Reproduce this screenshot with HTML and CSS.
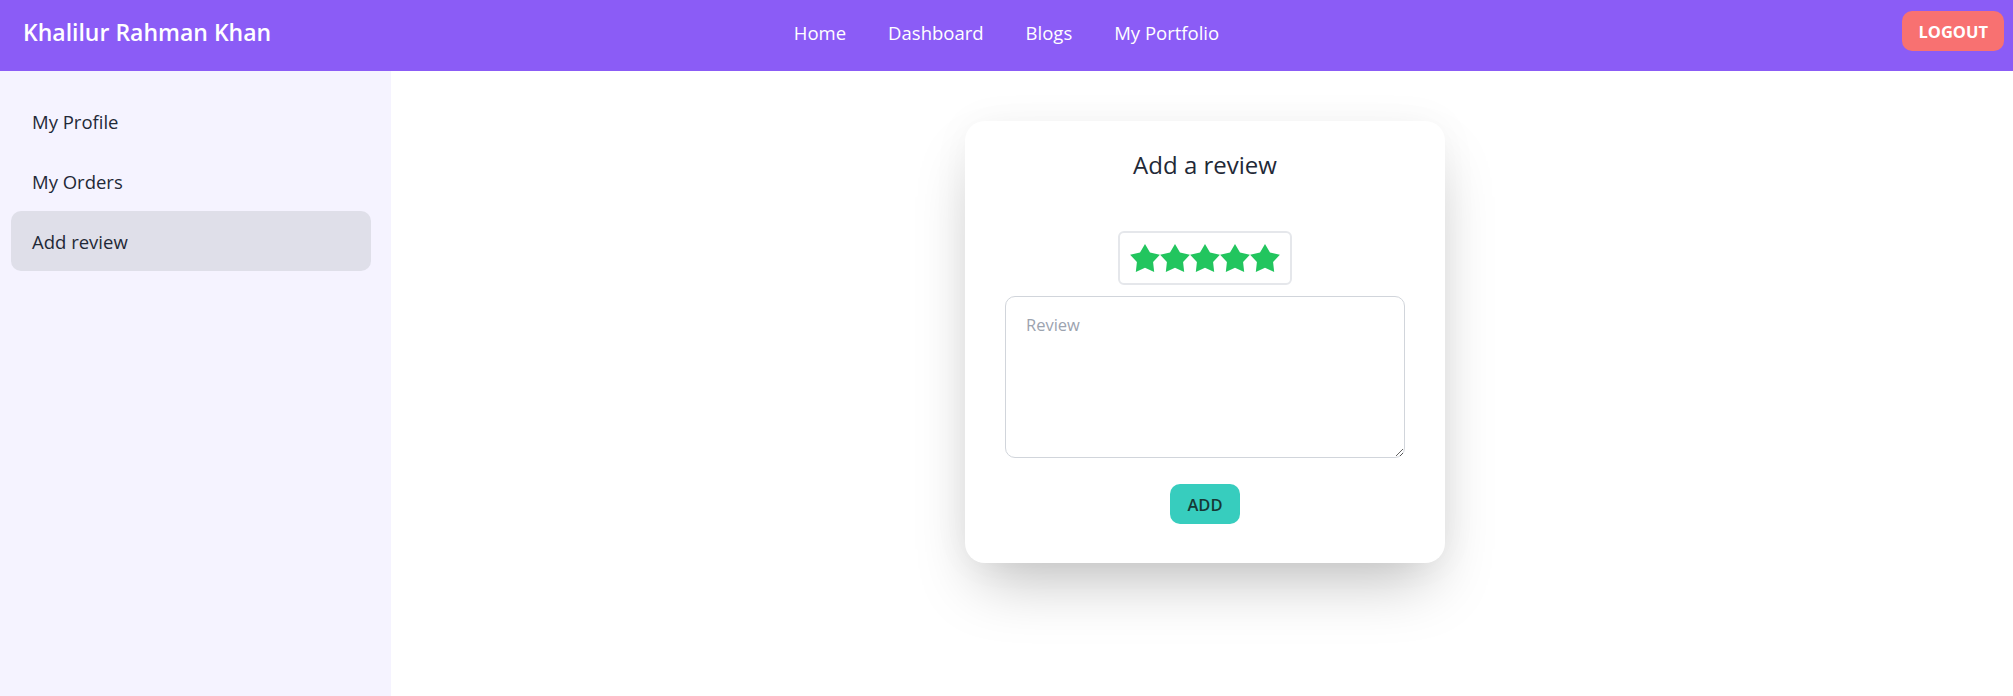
FILE: index.html
```html
<!DOCTYPE html>
<html lang="en">
<head>
<meta charset="utf-8">
<title>Add a review</title>
<link rel="stylesheet" href="styles.css">
</head>
<body>
<header class="navbar">
  <a class="brand" href="#">Khalilur Rahman Khan</a>
  <nav class="links">
    <a href="#">Home</a>
    <a href="#">Dashboard</a>
    <a href="#">Blogs</a>
    <a href="#">My Portfolio</a>
  </nav>
  <div class="nav-end"><button class="logout">LOGOUT</button></div>
</header>
<div class="layout">
  <aside class="sidebar">
    <ul class="menu">
      <li><a href="#">My Profile</a></li>
      <li><a href="#">My Orders</a></li>
      <li><a href="#" class="active">Add review</a></li>
    </ul>
  </aside>
  <main class="content">
    <div class="card">
      <h2 class="card-title">Add a review</h2>
      <div class="rating">
        <svg class="star" viewBox="0 0 192 180"><path d="m96 153.044-58.779 26.243 7.02-63.513L.894 68.481l63.117-13.01L96 0l31.989 55.472 63.117 13.01-43.347 47.292 7.02 63.513z"/></svg>
        <svg class="star" viewBox="0 0 192 180"><path d="m96 153.044-58.779 26.243 7.02-63.513L.894 68.481l63.117-13.01L96 0l31.989 55.472 63.117 13.01-43.347 47.292 7.02 63.513z"/></svg>
        <svg class="star" viewBox="0 0 192 180"><path d="m96 153.044-58.779 26.243 7.02-63.513L.894 68.481l63.117-13.01L96 0l31.989 55.472 63.117 13.01-43.347 47.292 7.02 63.513z"/></svg>
        <svg class="star" viewBox="0 0 192 180"><path d="m96 153.044-58.779 26.243 7.02-63.513L.894 68.481l63.117-13.01L96 0l31.989 55.472 63.117 13.01-43.347 47.292 7.02 63.513z"/></svg>
        <svg class="star" viewBox="0 0 192 180"><path d="m96 153.044-58.779 26.243 7.02-63.513L.894 68.481l63.117-13.01L96 0l31.989 55.472 63.117 13.01-43.347 47.292 7.02 63.513z"/></svg>
      </div>
      <textarea class="review" placeholder="Review"></textarea>
      <button class="add">ADD</button>
    </div>
  </main>
</div>
</body>
</html>
```

FILE: styles.css
```css
html, body {
  margin: 0;
  height: 100%;
}

body {
  font-family: "Open Sans", "Noto Sans", sans-serif;
  background: #ffffff;
  color: #1f2937;
}

a {
  text-decoration: none;
  color: inherit;
}

.navbar {
  height: 71px;
  box-sizing: border-box;
  background: #8b5cf6;
  display: grid;
  grid-template-columns: 1fr auto 1fr;
  align-items: center;
  padding: 0 9px 7px 9px;
}

.brand {
  justify-self: start;
  padding-left: 14px;
  color: #ffffff;
  font-size: 23px;
  font-weight: 600;
}

.links {
  display: flex;
  gap: 42px;
  color: #ffffff;
  font-size: 18.5px;
}

.nav-end {
  justify-self: end;
}

.logout {
  height: 40px;
  padding: 0 16px;
  border: none;
  border-radius: 10px;
  background: #f87171;
  color: #ffffff;
  font-family: inherit;
  font-size: 16.5px;
  font-weight: 700;
  margin-top: -2px;
}

.layout {
  display: flex;
  min-height: calc(100vh - 71px);
}

.sidebar {
  width: 391px;
  flex-shrink: 0;
  box-sizing: border-box;
  background: #f5f3ff;
  padding: 20px 20px 20px 11px;
}

.menu {
  list-style: none;
  margin: 0;
  padding: 0;
}

.menu a {
  display: flex;
  align-items: center;
  height: 60px;
  padding: 0 21px;
  font-size: 18.5px;
  color: #1f2937;
  border-radius: 10px;
}

.menu a.active {
  background: #dfdfe9;
}

.content {
  flex: 1;
  display: flex;
  justify-content: center;
  align-items: flex-start;
  padding-top: 50px;
  padding-left: 6px;
}

.card {
  width: 480px;
  box-sizing: border-box;
  background: #ffffff;
  border-radius: 20px;
  padding: 26px 40px 39px;
  display: flex;
  flex-direction: column;
  align-items: center;
  box-shadow: 0 31px 62px -15px rgba(0, 0, 0, 0.25), 0 0 40px rgba(0, 0, 0, 0.04);
}

.card-title {
  margin: 0;
  font-size: 24px;
  font-weight: 400;
  line-height: 36px;
  color: #1f2937;
}

.rating {
  margin-top: 48px;
  display: flex;
  border: 2px solid #e5e7eb;
  border-radius: 6px;
  padding: 10px 10px;
}

.star {
  width: 30px;
  height: 30px;
  fill: #22c55e;
}

.review {
  margin-top: 11px;
  width: 400px;
  height: 162px;
  box-sizing: border-box;
  border: 1px solid #d1d5db;
  border-radius: 10px;
  padding: 16px 20px;
  font-family: inherit;
  font-size: 16.5px;
  line-height: 1.5;
  color: #1f2937;
  outline: none;
}

.review::placeholder {
  color: #9ca3af;
}

.add {
  margin-top: 26px;
  height: 40px;
  padding: 0 17px;
  border: none;
  border-radius: 10px;
  background: #37cdbe;
  color: #163835;
  font-family: inherit;
  font-size: 16.5px;
  font-weight: 600;
}
```
